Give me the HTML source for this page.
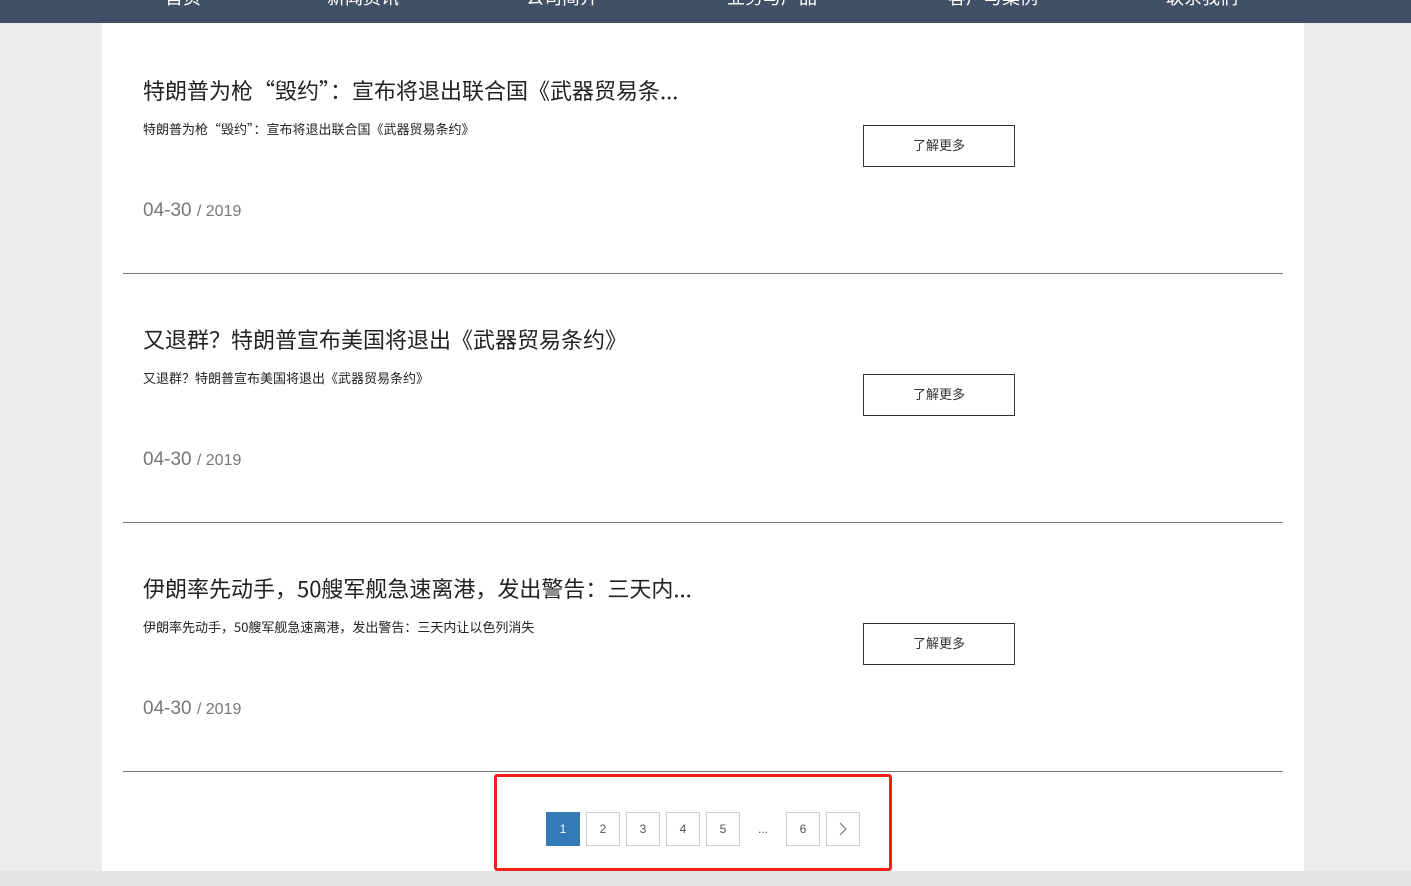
<!DOCTYPE html><html><head><meta charset="utf-8"><style>
body{margin:0;width:1411px;height:886px;overflow:hidden;background:#ececec;font-family:"Liberation Sans","Noto Sans CJK SC",sans-serif;position:relative}
.nav{position:absolute;left:0;top:0;width:1411px;height:23px;background:#425066;overflow:hidden}
.nav span{position:absolute;top:-16px;color:#fff;font-size:18px;transform:translateX(-50%)}
.panel{position:absolute;left:102px;top:23px;width:1202px;height:848px;background:#fff}
.bot{position:absolute;left:0;top:871px;width:1411px;height:15px;background:#e3e3e3}
.t{position:absolute;left:143px;font-size:22px;color:#222;white-space:nowrap;font-family:"Noto Sans CJK SC","Liberation Sans",sans-serif;line-height:28px}
.d{position:absolute;left:143px;font-size:13px;color:#222;white-space:nowrap;font-family:"Noto Sans CJK SC","Liberation Sans",sans-serif;line-height:18px}
.dt{position:absolute;left:143px;font-size:19px;color:#777}
.dt small{font-size:16px}
.btn{position:absolute;left:863px;width:150px;height:40px;border:1px solid #333;font-size:13px;color:#333;text-align:center;line-height:40px}
.hr{position:absolute;left:123px;width:1160px;height:1px;background:#777}
.pg{position:absolute;top:812px;width:32px;height:32px;border:1px solid #ccc;text-align:center;line-height:32px;font-size:12px;color:#555;box-sizing:content-box}
.red{position:absolute;left:494px;top:774px;width:392px;height:91px;border:3px solid #f0201a;border-radius:3px}
</style></head><body>
<div class="nav"><span style="left:183px">首页</span><span style="left:363px">新闻资讯</span><span style="left:562px">公司简介</span><span style="left:772px">业务与产品</span><span style="left:993px">客户与案例</span><span style="left:1202px">联系我们</span></div>
<div class="panel"></div>
<div class="bot"></div>

<div class="t" style="top:76px">特朗普为枪“毁约”：宣布将退出联合国《武器贸易条...</div>
<div class="d" style="top:120px">特朗普为枪“毁约”：宣布将退出联合国《武器贸易条约》</div>
<div class="btn" style="top:125px">了解更多</div>
<div class="dt" style="top:200px">04-30 <small>/ 2019</small></div>
<div class="hr" style="top:273px"></div>

<div class="t" style="top:325px">又退群？特朗普宣布美国将退出《武器贸易条约》</div>
<div class="d" style="top:369px">又退群？特朗普宣布美国将退出《武器贸易条约》</div>
<div class="btn" style="top:374px">了解更多</div>
<div class="dt" style="top:449px">04-30 <small>/ 2019</small></div>
<div class="hr" style="top:522px"></div>

<div class="t" style="top:574px">伊朗率先动手，50艘军舰急速离港，发出警告：三天内...</div>
<div class="d" style="top:618px">伊朗率先动手，50艘军舰急速离港，发出警告：三天内让以色列消失</div>
<div class="btn" style="top:623px">了解更多</div>
<div class="dt" style="top:698px">04-30 <small>/ 2019</small></div>
<div class="hr" style="top:771px"></div>

<div class="red"></div>
<div class="pg" style="left:546px;background:#337ab7;border-color:#337ab7;color:#fff">1</div>
<div class="pg" style="left:586px">2</div>
<div class="pg" style="left:626px">3</div>
<div class="pg" style="left:666px">4</div>
<div class="pg" style="left:706px">5</div>
<div class="pg" style="left:746px;border-color:transparent">...</div>
<div class="pg" style="left:786px">6</div>
<div class="pg" style="left:826px"><svg width="32" height="32"><path d="M13 10l6 6-6 6" fill="none" stroke="#777" stroke-width="1.2"/></svg></div>
</body></html>
